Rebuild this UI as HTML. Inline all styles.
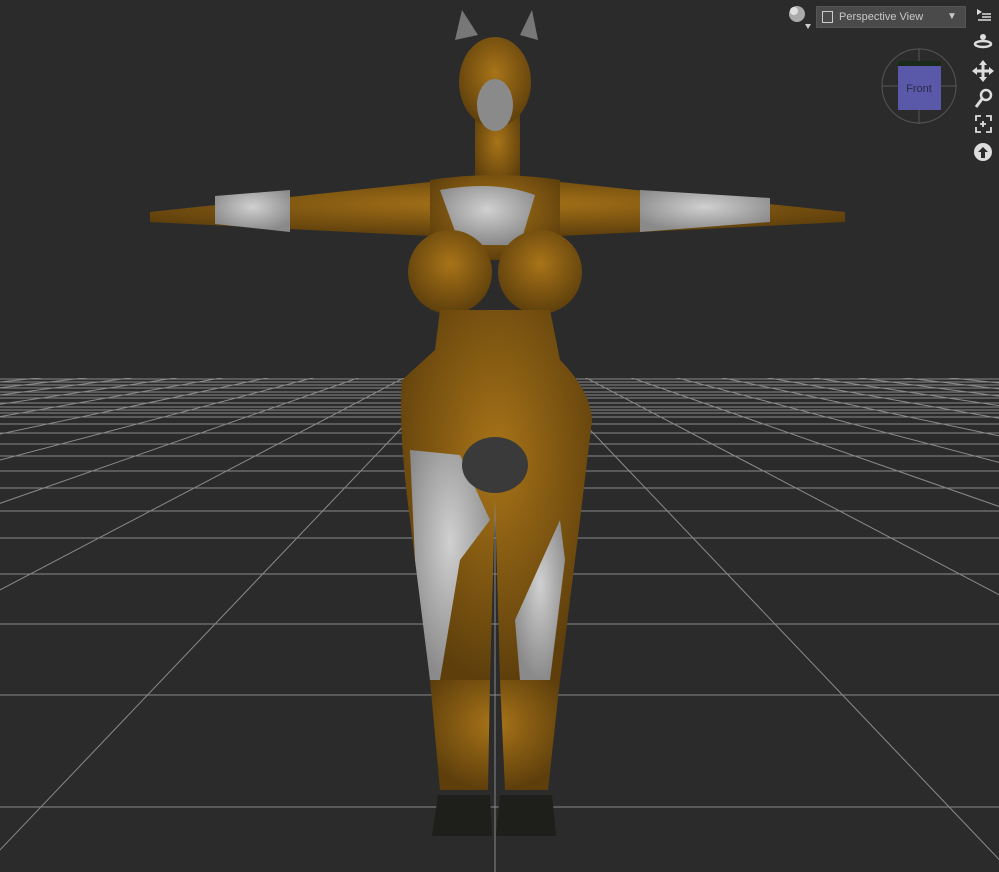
<!DOCTYPE html>
<html><head><meta charset="utf-8"><style>
html,body{margin:0;padding:0;background:#2b2b2b;width:999px;height:872px;overflow:hidden;font-family:"Liberation Sans",sans-serif}
#dd{position:absolute;left:816px;top:6px;width:150px;height:22px;background:#4a4a4a;border:1px solid #555;box-sizing:border-box;color:#c8c8c8;font-size:11px;line-height:20px}
</style></head><body>
<svg width="999" height="872" style="position:absolute;left:0;top:0">
<defs><clipPath id="c"><rect x="0" y="378" width="999" height="494"/></clipPath>
<radialGradient id="b" cx="50%" cy="40%" r="60%"><stop offset="0" stop-color="#a87418"/><stop offset="1" stop-color="#5e3f0c"/></radialGradient>
<radialGradient id="w" cx="50%" cy="40%" r="60%"><stop offset="0" stop-color="#d0d0d0"/><stop offset="1" stop-color="#8a8a8a"/></radialGradient>
</defs>
<g stroke="#8a8a8a" stroke-width="1" clip-path="url(#c)">
<line x1="0" x2="999" y1="379" y2="379"/><line x1="0" x2="999" y1="382" y2="382"/><line x1="0" x2="999" y1="385" y2="385"/><line x1="0" x2="999" y1="388" y2="388"/><line x1="0" x2="999" y1="392" y2="392"/><line x1="0" x2="999" y1="395" y2="395"/><line x1="0" x2="999" y1="398" y2="398"/><line x1="0" x2="999" y1="403" y2="403"/><line x1="0" x2="999" y1="407" y2="407"/><line x1="0" x2="999" y1="410" y2="410"/><line x1="0" x2="999" y1="413" y2="413"/><line x1="0" x2="999" y1="417" y2="417"/><line x1="0" x2="999" y1="424" y2="424"/><line x1="0" x2="999" y1="433" y2="433"/><line x1="0" x2="999" y1="444" y2="444"/><line x1="0" x2="999" y1="456" y2="456"/><line x1="0" x2="999" y1="471" y2="471"/><line x1="0" x2="999" y1="488" y2="488"/><line x1="0" x2="999" y1="511" y2="511"/><line x1="0" x2="999" y1="538" y2="538"/><line x1="0" x2="999" y1="574" y2="574"/><line x1="0" x2="999" y1="624" y2="624"/><line x1="0" x2="999" y1="695" y2="695"/><line x1="0" x2="999" y1="807" y2="807"/>
<line x1="495" y1="330" x2="495" y2="872"/>
<line x1="495" y1="330" x2="-21" y2="872"/><line x1="495" y1="330" x2="1011" y2="872"/>
<line x1="495" y1="330" x2="-537" y2="872"/><line x1="495" y1="330" x2="1527" y2="872"/>
<line x1="495" y1="330" x2="-1053" y2="872"/><line x1="495" y1="330" x2="2043" y2="872"/>
<line x1="495" y1="330" x2="-1569" y2="872"/><line x1="495" y1="330" x2="2559" y2="872"/>
<line x1="495" y1="330" x2="-2085" y2="872"/><line x1="495" y1="330" x2="3075" y2="872"/>
<line x1="495" y1="330" x2="-2601" y2="872"/><line x1="495" y1="330" x2="3591" y2="872"/>
<line x1="495" y1="330" x2="-3117" y2="872"/><line x1="495" y1="330" x2="4107" y2="872"/>
<line x1="495" y1="330" x2="-3633" y2="872"/><line x1="495" y1="330" x2="4623" y2="872"/>
<line x1="495" y1="330" x2="-4149" y2="872"/><line x1="495" y1="330" x2="5139" y2="872"/>
<line x1="495" y1="330" x2="-4665" y2="872"/><line x1="495" y1="330" x2="5655" y2="872"/>
</g>
<g>
<path d="M150 212 L430 182 L560 182 L845 212 L845 222 L560 236 L430 236 L150 222Z" fill="url(#b)"/>
<path d="M215 196 L290 190 L290 232 L215 224Z" fill="url(#w)"/>
<path d="M640 190 L770 198 L770 222 L640 232Z" fill="url(#w)"/>
<rect x="475" y="110" width="45" height="80" fill="url(#b)"/>
<ellipse cx="495" cy="82" rx="36" ry="45" fill="url(#b)"/>
<ellipse cx="495" cy="105" rx="18" ry="26" fill="#8a8a8a"/>
<path d="M455 40 L462 10 L478 35Z M520 35 L532 10 L538 40Z" fill="#777"/>
<path d="M430 180 Q495 170 560 180 L560 250 Q495 270 430 250Z" fill="url(#b)"/>
<path d="M440 190 Q495 180 535 195 L520 245 L460 245Z" fill="url(#w)"/>
<ellipse cx="450" cy="272" rx="42" ry="42" fill="url(#b)"/>
<ellipse cx="540" cy="272" rx="42" ry="42" fill="url(#b)"/>
<path d="M440 310 L550 310 L560 360 Q590 390 592 420 L580 520 L560 680 L500 680 L495 500 L490 680 L430 680 L410 520 Q398 430 402 380 L435 350Z" fill="url(#b)"/>
<path d="M410 450 L460 455 L490 520 L460 560 L440 680 L430 680 L415 560Z" fill="url(#w)"/>
<path d="M560 520 L565 560 L550 680 L520 680 L515 620Z" fill="url(#w)"/>
<ellipse cx="495" cy="465" rx="33" ry="28" fill="#3a3a3a"/>
<path d="M430 680 L490 680 L488 790 L440 790Z M500 680 L560 680 L548 790 L505 790Z" fill="url(#b)"/>
<path d="M438 795 L490 795 L492 836 L432 836Z M500 795 L552 795 L556 836 L496 836Z" fill="#1e1e1a"/>
</g>
<circle cx="919" cy="86" r="37" fill="none" stroke="#555" stroke-width="1"/>
<line x1="919" y1="48" x2="919" y2="124" stroke="#555"/><line x1="882" y1="86" x2="957" y2="86" stroke="#555"/>
<rect x="898" y="61" width="43" height="6" fill="#1a2a1a"/>
<rect x="898" y="66" width="43" height="44" fill="#5a58a8"/>
<text x="919" y="92" font-size="11" fill="#2a2a4a" text-anchor="middle" font-family="Liberation Sans">Front</text>
<circle cx="797" cy="14" r="8" fill="#aaa"/><circle cx="794" cy="11" r="4" fill="#e0e0e0"/>
<path d="M805 24 L811 24 L808 29Z" fill="#ccc"/>
<g fill="#ddd" stroke="#ddd">
<path d="M977 9 L982 12 L977 15Z" stroke="none"/><path d="M982 14H991M982 17H991M978 20H991" stroke-width="1.5" fill="none"/>
<ellipse cx="983" cy="44" rx="8" ry="3" fill="none" stroke-width="2.5"/><circle cx="983" cy="37" r="3" stroke="none"/>
<path d="M983 62 V80 M974 71 H992" stroke-width="3"/><path d="M983 60l-4 5h8z M983 82l-4-5h8z M972 71l5-4v8z M994 71l-5-4v8z" stroke="none"/>
<circle cx="986" cy="95" r="5" fill="none" stroke-width="2.5"/><path d="M982 99 L976 107" stroke-width="3"/>
<path d="M976 121v-5h5 M986 116h5v5 M991 127v5h-5 M981 132h-5v-5 M983 121v6 M980 124h6" fill="none" stroke-width="1.8"/>
<circle cx="983" cy="152" r="9" stroke="none"/><path d="M983 147 l-5 5h3v6h4v-6h3z" fill="#2b2b2b" stroke="none"/>
</g>
</svg>
<div id="dd"><span style="position:absolute;left:5px;top:4px;width:11px;height:12px;border:1.5px solid #ccc;box-sizing:border-box"></span><span style="position:absolute;left:22px">Perspective View</span><span style="position:absolute;left:130px;font-size:10px">▼</span></div>
</body></html>
